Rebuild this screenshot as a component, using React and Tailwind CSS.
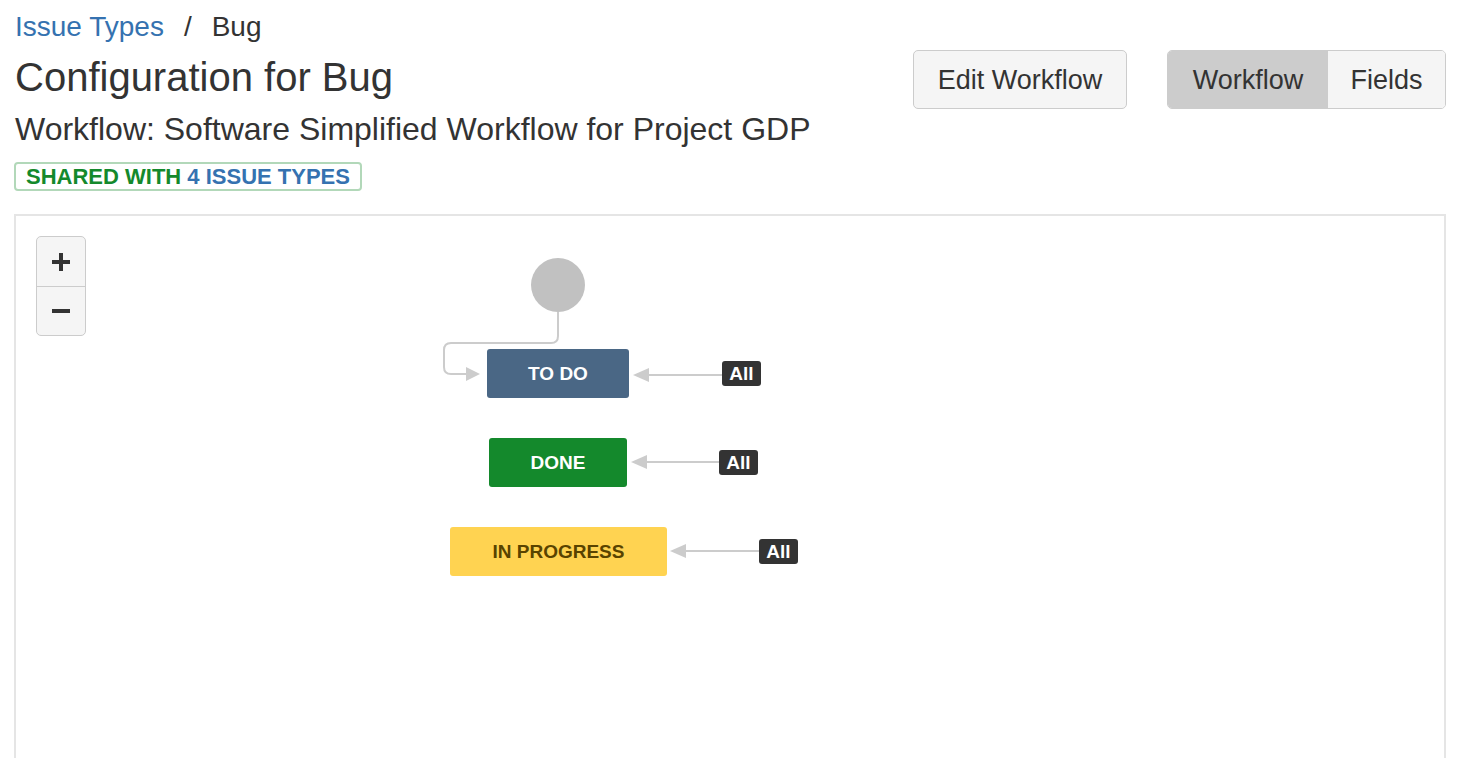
import React from 'react'

const FONT = { fontFamily: '"Liberation Sans", Arial, Helvetica, sans-serif' }

// status nodes placed on the diagram canvas (coords relative to the panel)
const NODES = [
  { label: 'TO DO', cls: 'left-[471px] top-[133px] w-[142px] bg-[#4a6785] text-white' },
  { label: 'DONE', cls: 'left-[473px] top-[222px] w-[138px] bg-[#14892c] text-white' },
  { label: 'IN PROGRESS', cls: 'left-[434px] top-[311px] w-[217px] bg-[#ffd351] text-[#594300]' },
]

const ALL_BADGES = [
  'left-[706px] top-[145px]',
  'left-[703px] top-[234px]',
  'left-[743px] top-[323px]',
]

// global transitions: arrow tip x, line end x, y
const GLOBAL_ARROWS = [
  { tip: 617, end: 706, y: 159 },
  { tip: 615, end: 703, y: 246 },
  { tip: 654, end: 743, y: 335 },
]

function Diagram() {
  return (
    <div className="relative mt-[23px] h-[620px] border-2 border-[#e5e5e5] bg-white">
      {/* zoom control */}
      <div className="absolute left-[20px] top-[20px] flex w-[50px] flex-col overflow-hidden rounded-[5px] border border-[#cccccc] bg-[#f5f5f5]">
        <button className="flex h-[49px] items-center justify-center">
          <svg width="20" height="20" viewBox="0 0 20 20">
            <path d="M10 1v18M1 10h18" stroke="#333" strokeWidth="4" />
          </svg>
        </button>
        <button className="flex h-[49px] items-center justify-center border-t border-[#cccccc]">
          <svg width="20" height="20" viewBox="0 0 20 20">
            <path d="M1 10h18" stroke="#333" strokeWidth="4" />
          </svg>
        </button>
      </div>

      <svg className="absolute left-0 top-0" width="900" height="420">
        <path
          d="M542 96 V120 Q542 127 535 127 H435 Q428 127 428 134 V151 Q428 158 435 158 H452"
          fill="none"
          stroke="#cccccc"
          strokeWidth="2"
        />
        <polygon points="450,151 464,158 450,165" fill="#cccccc" />
        {GLOBAL_ARROWS.map((a) => (
          <g key={a.y}>
            <line x1={a.tip + 14} y1={a.y} x2={a.end} y2={a.y} stroke="#cccccc" strokeWidth="2" />
            <polygon points={`${a.tip},${a.y} ${a.tip + 16},${a.y - 7} ${a.tip + 16},${a.y + 7}`} fill="#cccccc" />
          </g>
        ))}
      </svg>

      {/* initial node */}
      <div className="absolute left-[515px] top-[42px] h-[54px] w-[54px] rounded-full bg-[#c1c1c1]" />

      {NODES.map((n) => (
        <div
          key={n.label}
          className={`absolute flex h-[49px] items-center justify-center rounded-[3px] pt-[2px] text-[19px] font-bold ${n.cls}`}
        >
          {n.label}
        </div>
      ))}

      {ALL_BADGES.map((pos) => (
        <div
          key={pos}
          className={`absolute flex h-[25px] w-[39px] items-center justify-center rounded-[3px] bg-[#333333] pt-px text-[19px] font-bold text-white ${pos}`}
        >
          All
        </div>
      ))}
    </div>
  )
}

export default function App() {
  return (
    <div className="h-screen overflow-hidden bg-white pl-[14px] pr-[18px] text-[#333333]" style={FONT}>
      <div className="flex items-start justify-between">
        <div className="pl-px">
          <div className="pt-[10px] text-[28px] leading-[34px]">
            <a className="text-[#3572b0]">Issue Types</a>
            <span className="mx-[20px]">/</span>
            <span>Bug</span>
          </div>
          <h1 className="mt-[9px] text-[40px] leading-[48px]">Configuration for Bug</h1>
          <h3 className="mt-[9px] text-[32px] leading-[38px]">Workflow: Software Simplified Workflow for Project GDP</h3>
          <div className="-ml-px mt-[14px] inline-flex h-[29px] items-center rounded-[4px] border-2 border-[#b2d8b9] px-[10px] text-[22px] font-bold uppercase leading-[25px]">
            <span className="text-[#14892c]">Shared with&nbsp;</span>
            <span className="text-[#3572b0]">4 issue types</span>
          </div>
        </div>

        <div className="mt-[50px] flex items-center gap-[40px]">
          <button className="flex h-[59px] w-[214px] items-center justify-center rounded-[5px] border border-[#cccccc] bg-[#f5f5f5] pt-[2px] text-[27px]">
            Edit Workflow
          </button>
          <div className="flex h-[59px] overflow-hidden rounded-[5px] border border-[#cccccc] text-[27px]">
            <button className="flex w-[160px] items-center justify-center bg-[#cccccc] pt-[2px]">Workflow</button>
            <button className="flex w-[117px] items-center justify-center bg-[#f5f5f5] pt-[2px]">Fields</button>
          </div>
        </div>
      </div>

      <Diagram />
    </div>
  )
}
